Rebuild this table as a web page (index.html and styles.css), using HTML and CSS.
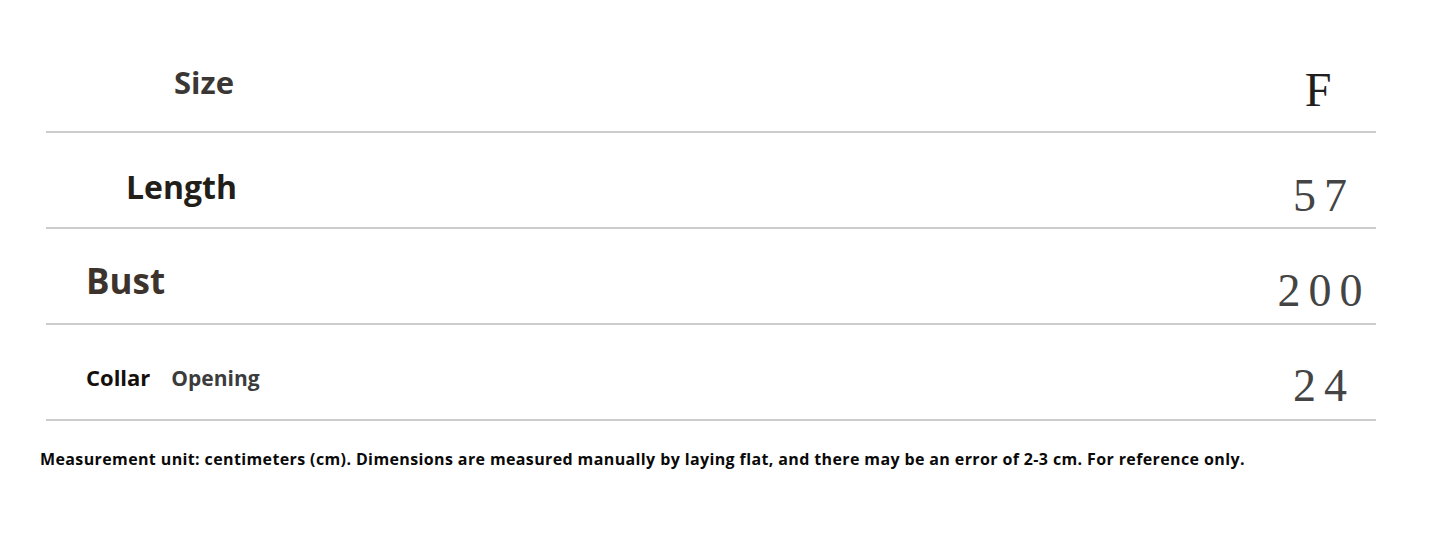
FILE: index.html
```html
<!DOCTYPE html>
<html lang="en">
<head>
<meta charset="utf-8">
<title>Size chart</title>
<link rel="stylesheet" href="styles.css">
</head>
<body>
<main class="page">
  <section class="chart">
    <div class="row row--size">
      <div class="label">Size</div>
      <div class="value value--letter">F</div>
    </div>
    <div class="row row--length">
      <div class="label">Length</div>
      <div class="value">57</div>
    </div>
    <div class="row row--bust">
      <div class="label">Bust</div>
      <div class="value">200</div>
    </div>
    <div class="row row--collar">
      <div class="label"><span class="label-main">Collar</span><span class="label-sub">Opening</span></div>
      <div class="value">24</div>
    </div>
  </section>
  <p class="note">Measurement unit: centimeters (cm). Dimensions are measured manually by laying flat, and there may be an error of 2-3 cm. For reference only.</p>
</main>
</body>
</html>
```

FILE: styles.css
```css
html, body {
  margin: 0;
  padding: 0;
  background: #ffffff;
}

.page {
  width: 1445px;
  height: 556px;
  overflow: hidden;
}

.chart {
  margin: 37px 0 0 46px;
  width: 1330px;
}

.row {
  display: grid;
  grid-template-columns: 1fr 112px;
  align-items: start;
  height: 94px;
  border-bottom: 2px solid #cdcdcd;
}

.label {
  font-family: "Open Sans", "Liberation Sans", sans-serif;
  font-weight: 700;
  line-height: 1;
  white-space: nowrap;
}

.value {
  font-family: "Liberation Serif", "DejaVu Serif", serif;
  font-weight: 400;
  font-size: 46px;
  line-height: 1;
  color: #444444;
  text-align: center;
  letter-spacing: 8px;
  text-indent: 8px;
}

.value--letter {
  font-size: 48px;
  letter-spacing: 0;
  text-indent: 0;
  padding-right: 4px;
  color: #1f1f1f;
}

.row--size .label {
  padding: 30px 0 0 128px;
  font-size: 31px;
  color: #3b3734;
}
.row--size .value { padding-top: 29px; }

.row--length .label {
  padding: 38px 0 0 80px;
  font-size: 32px;
  color: #221e1a;
}
.row--length .value { padding-top: 40px; }

.row--bust .label {
  padding: 34px 0 0 40px;
  font-size: 35px;
  color: #3d332d;
}
.row--bust .value { padding-top: 39px; }

.row--collar .label {
  padding: 41px 0 0 40px;
  font-size: 22px;
  color: #150e0b;
}
.row--collar .value { padding-top: 38px; }

.label-sub {
  margin-left: 21px;
  font-size: 21px;
  color: #3c3c3c;
}

.note {
  margin: 30px 0 0 40px;
  font-family: "Open Sans", "Liberation Sans", sans-serif;
  font-weight: 700;
  font-size: 16px;
  letter-spacing: 0.38px;
  line-height: 1;
  color: #0a0a0a;
  white-space: nowrap;
}
```
